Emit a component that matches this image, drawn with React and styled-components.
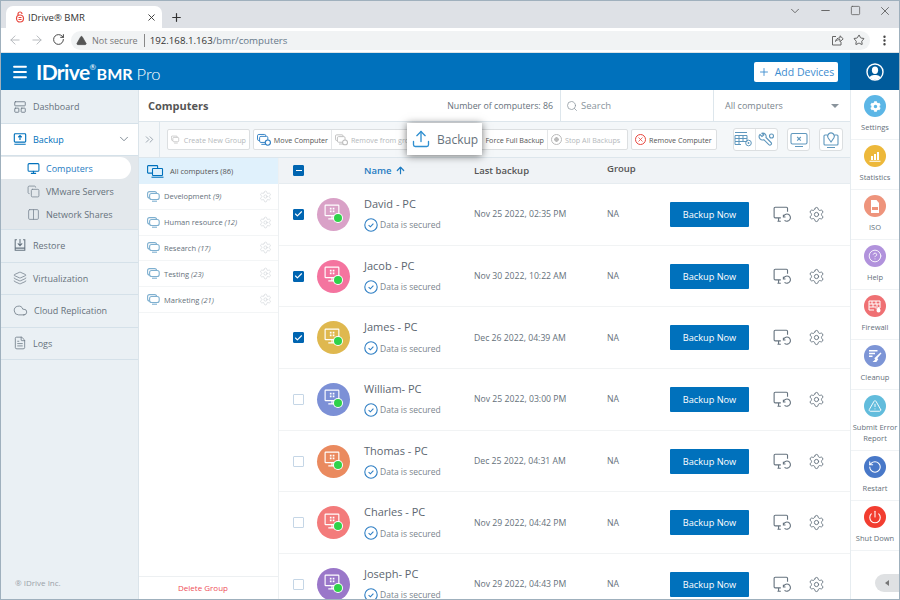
import React from 'react';
import styled, { createGlobalStyle } from 'styled-components';
import { FaCog } from 'react-icons/fa';
import {
  ArrowLeft, ArrowRight, RotateCw, TriangleAlert, Star, EllipsisVertical, Plus, X, Minus, Square, ChevronDown,
  Menu, LayoutPanelTop, Monitor, Copy, Columns2, Layers, Cloud, FileText, Search, Settings, CircleHelp, RotateCcw, Power,
  ChevronsRight, ArrowUp, Check, Upload,
} from 'lucide-react';

const GlobalStyle = createGlobalStyle`
  html, body { margin: 0; padding: 0; background: #fff; }
  body { font-family: "Open Sans", "Liberation Sans", sans-serif; color: #555; overflow: hidden; }
  * { box-sizing: border-box; }
`;

const UploadTray = ({ size = 14, color = '#0071bc' }) => (
  <svg width={size} height={size} viewBox="0 0 16 16" fill="none" stroke={color} strokeWidth="1.3">
    <rect x="1.5" y="2" width="13" height="9.5" rx="1" />
    <path d="M8 9V4.4M6 6l2-2 2 2M1.5 14h13" />
  </svg>
);

const RestoreIcon = () => (
  <svg width="14" height="15" viewBox="0 0 16 17" fill="none" stroke="#66737f" strokeWidth="1.2">
    <path d="M4.5 2H2.5v12h11V2h-2M8 1v7.5M5.5 6.2 8 8.8l2.5-2.6M2.5 11.5h11" />
  </svg>
);

const PcGroupIcon = ({ color = '#7fb0d0' }) => (
  <svg width="13" height="11" viewBox="0 0 13 11" fill="none" stroke={color} strokeWidth="1.1">
    <rect x="0.6" y="0.6" width="9" height="6.5" rx="2" />
    <rect x="2.6" y="2.5" width="9.6" height="6" rx="2" fill="#fff" />
    <path d="M5 10.2h5" />
  </svg>
);

const AllPcIcon = () => (
  <svg width="17" height="13" viewBox="0 0 17 13" fill="none" stroke="#0071bc" strokeWidth="1.1">
    <rect x="0.6" y="0.6" width="10" height="7.5" rx="0.6" />
    <rect x="5.5" y="3.5" width="10" height="7" rx="0.6" fill="#e0f1fc" />
    <path d="M4.5 12.2h12" />
  </svg>
);

const PcStatusIcon = () => (
  <svg width="19" height="19" viewBox="0 0 18 18" fill="none" stroke="#fff" strokeWidth="1.1">
    <rect x="2" y="2" width="13" height="10" rx="0.6" />
    <path d="M5 15h7M8.5 12v3" />
    <path d="M6.5 4.5h1.6v1.6H6.5zM9.2 4.5h1.6v1.6H9.2zM6.5 7.2h1.6v1.6H6.5zM9.2 7.2h1.6v1.6H9.2z" fill="#fff" stroke="none" />
  </svg>
);

const RowRestoreIcon = () => (
  <svg width="19" height="17" viewBox="0 0 17 15" fill="none" stroke="#66737f" strokeWidth="1">
    <path d="M7 10.5H2a1 1 0 0 1-1-1V2a1 1 0 0 1 1-1h10a1 1 0 0 1 1 1v3M4 13.5h3M5 10.5v3" />
    <path d="M9.3 9.5a3.2 3.2 0 1 1 1 3.2M9.3 7.8v1.9h1.9" />
  </svg>
);

const ToolPcIcon = ({ color, badge }) => (
  <svg width="16" height="14" viewBox="0 0 16 14" fill="none" stroke={color} strokeWidth="1.1">
    <rect x="0.6" y="0.6" width="9.5" height="7" rx="1.5" />
    <rect x="3" y="2.8" width="9.5" height="7" rx="1.5" fill="#fff" />
    <path d="M5 12h6" />
    {badge && <circle cx="12.5" cy="10" r="3" fill="#fff" stroke={badge} strokeWidth="1.3" />}
  </svg>
);

const ScheduleIcon = () => (
  <svg width="20" height="17" viewBox="0 0 20 17" fill="none" stroke="#5f97bd" strokeWidth="1">
    <path d="M1 1.5h12M1 4.5h12v6H1zM1 7.5h12M5 4.5v9M9 4.5v6M1 10.5v3h6" />
    <circle cx="14.5" cy="12" r="2.8" />
    <circle cx="14.5" cy="12" r="0.9" fill="#5f97bd" stroke="none" />
  </svg>
);

const WrenchIcon = () => (
  <svg width="18" height="16" viewBox="0 0 18 16" fill="none" stroke="#5f97bd" strokeWidth="1.1">
    <path d="M3 2.5 5 4.5 6.8 3 5 1.2a3.4 3.4 0 0 1 4 4.3l5 5a1.5 1.5 0 0 1-2.2 2.2l-5-5A3.4 3.4 0 0 1 2.5 3z" />
    <circle cx="14.5" cy="4" r="2" />
  </svg>
);

const ScreenXIcon = () => (
  <svg width="18" height="16" viewBox="0 0 18 16" fill="none" stroke="#5f97bd" strokeWidth="1.1">
    <rect x="1" y="1.5" width="16" height="10.5" rx="1.5" />
    <path d="M7.2 5l3.6 3.6M10.8 5 7.2 8.6M5 14.5h8" />
  </svg>
);

const ScreenPinIcon = () => (
  <svg width="16" height="18" viewBox="0 0 16 18" fill="none" stroke="#5f97bd" strokeWidth="1.1">
    <path d="M4 4H2a1 1 0 0 0-1 1v8a1 1 0 0 0 1 1h12a1 1 0 0 0 1-1V5a1 1 0 0 0-1-1h-2M4 16.5h8" />
    <path d="M8 11 5.2 7a3.3 3.3 0 1 1 5.6 0z" />
  </svg>
);

const SecuredIcon = () => (
  <svg width="14" height="14" viewBox="0 0 14 14" fill="none" stroke="#2f7fc4" strokeWidth="1.1">
    <circle cx="7" cy="7" r="6.2" />
    <path d="M4.6 7.1 6.4 8.8 9.4 5.6" />
  </svg>
);

const ShareBoxIcon = () => (
  <svg width="13" height="12" viewBox="0 0 13 12" fill="none" stroke="#666" strokeWidth="1">
    <path d="M5 2.5H1.5v8.5h8.5V8" />
    <path d="M4.5 7.5c.3-2.4 2-3.6 4.5-3.6V1.8l3.2 3-3.2 3V5.6c-1.8 0-3.4.5-4.5 1.9z" />
  </svg>
);

const ProfileIcon = () => (
  <svg width="18" height="18" viewBox="0 0 18 18">
    <defs>
      <clipPath id="profile-clip"><circle cx="9" cy="9" r="7.6" /></clipPath>
    </defs>
    <g clipPath="url(#profile-clip)" fill="#fff">
      <ellipse cx="9" cy="7.2" rx="3.1" ry="3.7" />
      <path d="M2.5 18c0-4.5 3-6 6.5-6s6.5 1.5 6.5 6z" />
    </g>
    <circle cx="9" cy="9" r="8" fill="none" stroke="#fff" strokeWidth="1.4" />
  </svg>
);

const menuTop = [
  { label: 'Dashboard', icon: <LayoutPanelTop size={14} color="#66737f" strokeWidth={1.4} /> },
];
const menuBottom = [
  { label: 'Restore', icon: <RestoreIcon /> },
  { label: 'Virtualization', icon: <Layers size={14} color="#66737f" strokeWidth={1.2} /> },
  { label: 'Cloud Replication', icon: <Cloud size={15} color="#66737f" strokeWidth={1.2} /> },
  { label: 'Logs', icon: <FileText size={14} color="#66737f" strokeWidth={1.3} /> },
];
const groups = [
  ['Development', '(9)'],
  ['Human resource', '(12)'],
  ['Research', '(17)'],
  ['Testing', '(23)'],
  ['Marketing', '(21)'],
];
const computers = [
  { name: 'David - PC', date: 'Nov 25 2022, 02:35 PM', color: '#d9a1c7', checked: true },
  { name: 'Jacob - PC', date: 'Nov 30 2022, 10:22 AM', color: '#f4749f', checked: true },
  { name: 'James - PC', date: 'Dec 26 2022, 04:39 AM', color: '#dfb84f', checked: true },
  { name: 'William- PC', date: 'Nov 25 2022, 03:00 PM', color: '#7c90d6' },
  { name: 'Thomas - PC', date: 'Dec 25 2022, 04:31 AM', color: '#ea8a5f' },
  { name: 'Charles - PC', date: 'Nov 29 2022, 04:42 PM', color: '#f37b7b' },
  { name: 'Joseph- PC', date: 'Nov 29 2022, 04:43 PM', color: '#9a77c9' },
];
const W = { color: '#fff', strokeWidth: 1.8, size: 12 };
const rail = [
  { label: ['Settings'], color: '#5cb6e6', icon: <FaCog size={11} color="#fff" /> },
  { label: ['Statistics'], color: '#edb83a', icon: <svg width="12" height="12" viewBox="0 0 12 12" fill="#fff"><path d="M2 6h2v4H2zM5 4h2v6H5zM8 2h2v8H8zM0.5 10.7h11v1h-11z" /></svg> },
  { label: ['ISO'], color: '#ee947c', icon: <svg width="12" height="13" viewBox="0 0 12 13" fill="#fff"><path d="M2 0h5.5L10 3v10H2z" /><path d="M3 7h6v3H3z" fill="#ee947c" /></svg> },
  { label: ['Help'], color: '#b192dc', icon: <CircleHelp {...W} size={14} strokeWidth={1.5} /> },
  { label: ['Firewall'], color: '#ef7073', icon: <svg width="14" height="13" viewBox="0 0 14 13" fill="none" stroke="#fff" strokeWidth="1"><path d="M1 1h11v7H7.5M1 1v9h5M1 4h11M1 7h7M4 1v3M8 1v3M5 4v3M9 4v3" /><path d="M10.5 7c1.2 1.3 2 2.3 2 3.4a2 2 0 0 1-4 0c0-1.1.8-2.1 2-3.4z" fill="#fff" stroke="none" /></svg> },
  { label: ['Cleanup'], color: '#7d95d6', icon: <svg width="14" height="14" viewBox="0 0 14 14" fill="#fff"><path d="M1 1h8.5v1.4H1zM1 3.8h6v1.4H1zM1 6.6h3.5V8H1z" /><path d="M12.5 3.5l1 .8-4.2 5 1 1-2 2.7H4.5l2.8-2.5-1-1.2 1.4-1.2z" /></svg> },
  { label: ['Submit Error', 'Report'], color: '#62bcdc', icon: <TriangleAlert {...W} size={14} strokeWidth={1.6} /> },
  { label: ['Restart'], color: '#4878c8', icon: <RotateCcw {...W} size={14} strokeWidth={1.8} /> },
  { label: ['Shut Down'], color: '#f23d30', icon: <Power {...W} size={14} strokeWidth={1.8} /> },
];

export default function App() {
  return (
    <Frame>
      <GlobalStyle />
      <TabStrip>
        <Tab>
          <Favicon viewBox="0 0 10 12" fill="none" stroke="#e8453c" strokeWidth="1.2">
            <path d="M3 5V3a2 2 0 0 1 4 0M1.5 7.5a3.5 3.5 0 1 0 7 0 3.5 3.5 0 0 0-7 0zM3.5 6.5h3M3.5 8.5h3" />
          </Favicon>
          <TabTitle>IDrive® BMR</TabTitle>
          <X size={11} color="#333" strokeWidth={2} />
        </Tab>
        <NewTab><Plus size={13} color="#333" strokeWidth={2.2} /></NewTab>
        <WindowControls>
          <ChevronDown size={14} color="#555" strokeWidth={1.4} />
          <Minus size={13} color="#555" strokeWidth={1.6} />
          <Square size={11} color="#555" strokeWidth={1.6} />
          <X size={14} color="#555" strokeWidth={1.4} />
        </WindowControls>
      </TabStrip>

      <AddressBar>
        <NavIcons>
          <ArrowLeft size={14} color="#b3b6ba" strokeWidth={1.6} />
          <ArrowRight size={14} color="#b3b6ba" strokeWidth={1.6} />
          <RotateCw size={13} color="#444" strokeWidth={1.8} />
        </NavIcons>
        <Omnibox>
          <TriangleAlert size={11} color="#555" fill="#555" strokeWidth={1.5} />
          <NotSecure>Not secure</NotSecure>
          <UrlDivider />
          <Url>192.168.1.163<UrlPath>/bmr/computers</UrlPath></Url>
          <OmniActions>
            <ShareBoxIcon />
            <Star size={12} color="#444" strokeWidth={1.7} />
          </OmniActions>
        </Omnibox>
        <MoreButton><EllipsisVertical size={13} color="#444" strokeWidth={2.4} /></MoreButton>
      </AddressBar>

      <Header>
        <HeaderMain>
          <Menu size={18} color="#fff" strokeWidth={2.4} />
          <Logo>
            <LogoMark>IDrive<sup>®</sup></LogoMark>
            <LogoBmr>BMR</LogoBmr>
            <LogoPro>Pro</LogoPro>
          </Logo>
          <AddDevices><Plus size={12} strokeWidth={1.8} />Add Devices</AddDevices>
        </HeaderMain>
        <Profile><ProfileIcon /></Profile>
      </Header>

      <Body>
        <Sidebar>
          {menuTop.map((m) => (
            <MenuItem key={m.label}>{m.icon}{m.label}</MenuItem>
          ))}
          <MenuItem $active>
            <UploadTray />Backup
            <MenuChevron><ChevronDown size={14} color="#66737f" strokeWidth={1.4} /></MenuChevron>
          </MenuItem>
          <SubMenu>
            <SubItem $active><Monitor size={13} color="#0071bc" strokeWidth={2} />Computers</SubItem>
            <SubItem><Copy size={13} color="#7b8894" strokeWidth={1.5} />VMware Servers</SubItem>
            <SubItem><Columns2 size={13} color="#7b8894" strokeWidth={1.5} />Network Shares</SubItem>
          </SubMenu>
          {menuBottom.map((m) => (
            <MenuItem key={m.label}>{m.icon}{m.label}</MenuItem>
          ))}
          <Copyright>® IDrive Inc.</Copyright>
        </Sidebar>

        <Main>
          <TitleBar>
            <PageTitle>Computers</PageTitle>
            <Count>Number of computers: 86</Count>
            <SearchBox><Search size={12} color="#8a949c" strokeWidth={1.5} />Search</SearchBox>
            <FilterBox>All computers<Caret /></FilterBox>
          </TitleBar>

          <Toolbar>
            <Expand><ChevronsRight size={13} color="#7b8894" strokeWidth={1.3} /></Expand>
            <ToolGroup>
              <ToolButton $off $w={81}><ToolPcIcon color="#bbb" />Create New Group</ToolButton>
            </ToolGroup>
            <ToolGroup>
              <ToolButton $w={78}><ToolPcIcon color="#2f7fc4" badge="#2f7fc4" />Move Computer</ToolButton>
              <ToolButton $off $w={90}><ToolPcIcon color="#bbb" badge="#bbb" />Remove from group</ToolButton>
              <ToolButton $w={126} $end>
                <BackupDot />Force Full Backup
              </ToolButton>
              <ToolButton $off $w={79}>
                <StopIcon />Stop All Backups
              </ToolButton>
            </ToolGroup>
            <ToolGroup>
              <ToolButton $w={84}><RemoveIcon><X size={7} color="#e8453c" strokeWidth={2.6} /></RemoveIcon>Remove Computer</ToolButton>
            </ToolGroup>
            <ToolIcons>
              <IconGroup><IconButton $w={21.5}><ScheduleIcon /></IconButton><IconButton $w={21.5}><WrenchIcon /></IconButton></IconGroup>
              <IconGroup><IconButton $w={21}><ScreenXIcon /></IconButton></IconGroup>
              <IconGroup><IconButton $w={22}><ScreenPinIcon /></IconButton></IconGroup>
            </ToolIcons>
            <BackupPopup>
              <Upload size={20} color="#2f8fd0" strokeWidth={1.6} />
              Backup
            </BackupPopup>
          </Toolbar>

          <Content>
            <GroupPanel>
              <AllGroup><AllPcIcon />All computers (86)</AllGroup>
              {groups.map(([name, n]) => (
                <GroupRow key={name}>
                  <PcGroupIcon />
                  <GroupName>{name} <em>{n}</em></GroupName>
                  <Settings size={13} color="#cfd4d8" strokeWidth={1.2} />
                </GroupRow>
              ))}
              <DeleteGroup>Delete Group</DeleteGroup>
            </GroupPanel>

            <Table>
              <HeadRow>
                <CheckBox $on><MinusBar /></CheckBox>
                <span />
                <NameHead>Name <ArrowUp size={11} strokeWidth={2.6} /></NameHead>
                <HeadCell>Last backup</HeadCell>
                <GroupHead>Group</GroupHead>
              </HeadRow>
              {computers.map((c) => (
                <Row key={c.name}>
                  <CheckBox $on={c.checked}>{c.checked && <Check size={10} color="#fff" strokeWidth={3} />}</CheckBox>
                  <Avatar $color={c.color}><PcStatusIcon /><Online /></Avatar>
                  <NameCell>
                    <PcName>{c.name}</PcName>
                    <Secured><SecuredIcon />Data is secured</Secured>
                  </NameCell>
                  <DateCell>{c.date}</DateCell>
                  <DateCell>NA</DateCell>
                  <BackupNow>Backup Now</BackupNow>
                  <RowActions>
                    <RowRestoreIcon />
                    <Settings size={17} color="#66737f" strokeWidth={1.3} />
                  </RowActions>
                </Row>
              ))}
            </Table>
          </Content>
        </Main>

        <Rail>
          {rail.map((r) => (
            <RailItem key={r.label[0]}>
              <RailCircle $color={r.color}>{r.icon}</RailCircle>
              {r.label.map((l) => <RailLabel key={l}>{l}</RailLabel>)}
            </RailItem>
          ))}
          <Collapse><CollapseArrow /></Collapse>
        </Rail>
      </Body>
    </Frame>
  );
}

const Frame = styled.div`
  width: 900px;
  height: 600px;
  border: 1px solid #9fb0bd;
  display: flex;
  flex-direction: column;
  overflow: hidden;
  background: #fff;
`;

const TabStrip = styled.div`
  height: 27px;
  flex: none;
  background: #dee1e6;
  display: flex;
  align-items: flex-end;
  padding-left: 5px;
`;

const Tab = styled.div`
  width: 156px;
  height: 22px;
  background: #fff;
  border-radius: 7px 7px 0 0;
  display: flex;
  align-items: center;
  padding: 0 5px 0 9px;
`;

const Favicon = styled.svg`
  width: 10px;
  height: 12px;
  margin-right: 3px;
`;

const TabTitle = styled.span`
  flex: 1;
  font-size: 9.5px;
  color: #333;
`;

const NewTab = styled.div`
  width: 28px;
  height: 22px;
  display: flex;
  align-items: center;
  justify-content: center;
`;

const WindowControls = styled.div`
  margin-left: auto;
  margin-right: 7px;
  width: 104px;
  height: 27px;
  padding-bottom: 8px;
  display: flex;
  align-items: center;
  justify-content: space-between;
`;

const AddressBar = styled.div`
  height: 25px;
  flex: none;
  background: #fff;
  display: flex;
  align-items: center;
  padding-left: 7px;
  border-bottom: 1px solid #dfe3e6;
`;

const NavIcons = styled.div`
  width: 63px;
  display: flex;
  gap: 8px;
`;

const Omnibox = styled.div`
  width: 799px;
  height: 19px;
  border-radius: 10px;
  background: #f1f3f4;
  display: flex;
  align-items: center;
  padding: 0 5px 0 5px;
`;

const NotSecure = styled.span`
  font-size: 9px;
  color: #777;
  margin-left: 5px;
`;

const UrlDivider = styled.span`
  width: 1px;
  height: 13px;
  background: #888;
  margin: 0 5px 0 6px;
`;

const Url = styled.span`
  font-size: 9.7px;
  color: #333;
`;

const UrlPath = styled.span`
  color: #66788a;
`;

const OmniActions = styled.div`
  margin-left: auto;
  display: flex;
  align-items: center;
  gap: 9px;
`;

const MoreButton = styled.div`
  margin-left: 8px;
  display: flex;
`;

const Header = styled.div`
  height: 37px;
  flex: none;
  display: flex;
  background: #0071bc;
`;

const HeaderMain = styled.div`
  flex: 1;
  display: flex;
  align-items: center;
  padding: 0 12px 0 10px;
`;

const Logo = styled.div`
  display: flex;
  align-items: baseline;
  margin-left: 7px;
  color: #fff;
`;

const LogoMark = styled.span`
  font-family: "Lato", sans-serif;
  font-size: 21px;
  font-weight: 700;
  letter-spacing: -0.6px;

  sup {
    font-size: 8px;
    font-weight: 400;
    vertical-align: 10px;
    line-height: 0;
  }
`;

const LogoBmr = styled.span`
  font-family: "Lato", sans-serif;
  font-size: 16px;
  font-weight: 700;
  margin-left: 1px;
`;

const LogoPro = styled.span`
  font-family: "Lato", sans-serif;
  font-size: 16.5px;
  font-weight: 300;
  margin-left: 4px;
`;

const AddDevices = styled.button`
  margin-left: auto;
  width: 84px;
  height: 20px;
  border: 0;
  border-radius: 2px;
  background: #fff;
  color: #3d8ccf;
  font: 400 10.5px "Open Sans", sans-serif;
  display: flex;
  align-items: center;
  justify-content: center;
  gap: 5px;
  padding: 0;
`;

const Profile = styled.div`
  width: 49px;
  flex: none;
  background: #005b9b;
  display: flex;
  align-items: center;
  justify-content: center;
`;

const Body = styled.div`
  flex: 1;
  min-height: 0;
  display: flex;
`;

const Sidebar = styled.nav`
  width: 138px;
  flex: none;
  padding-top: 1px;
  background: #eaf0f4;
  border-right: 1px solid #dbe4ea;
  display: flex;
  flex-direction: column;
`;

const MenuItem = styled.div`
  height: 32.5px;
  flex: none;
  display: flex;
  align-items: center;
  gap: 6px;
  padding-left: 12px;
  font-size: 9px;
  font-weight: 500;
  color: ${(p) => (p.$active ? '#0071bc' : '#66717b')};
  background: ${(p) => (p.$active ? '#fff' : 'transparent')};
  border-bottom: 1px solid #d5e1e9;
`;

const MenuChevron = styled.span`
  margin-left: auto;
  margin-right: 7px;
  display: flex;
`;

const SubMenu = styled.div`
  height: 74px;
  flex: none;
  background: #e3e8ec;
  padding-top: 1px;
  border-bottom: 1px solid #d5e1e9;
`;

const SubItem = styled.div`
  width: 130px;
  height: 22px;
  margin-bottom: 1px;
  padding-left: 26px;
  display: flex;
  align-items: center;
  gap: 6px;
  font-size: 9px;
  font-weight: 500;
  color: ${(p) => (p.$active ? '#1f7cc2' : '#66717b')};
  background: ${(p) => (p.$active ? '#fff' : 'transparent')};
  border-radius: 0 11px 11px 0;
`;

const Copyright = styled.div`
  margin-top: auto;
  padding: 0 0 11px 14px;
  font-size: 8px;
  color: #9aa2a8;
`;

const Main = styled.div`
  flex: 1;
  min-width: 0;
  display: flex;
  flex-direction: column;
`;

const TitleBar = styled.div`
  height: 32px;
  flex: none;
  display: flex;
  align-items: stretch;
  padding-left: 9px;
  border-bottom: 1px solid #dde6ec;
`;

const PageTitle = styled.div`
  flex: 1;
  align-self: center;
  font-size: 11px;
  font-weight: 700;
  color: #555;
`;

const Count = styled.div`
  align-self: center;
  margin-right: 7px;
  font-size: 8.8px;
  color: #66717b;
`;

const SearchBox = styled.div`
  width: 154px;
  border-left: 1px solid #dde6ec;
  border-right: 1px solid #dde6ec;
  display: flex;
  align-items: center;
  gap: 3px;
  padding-left: 5px;
  font-size: 9.5px;
  color: #8a949c;
`;

const FilterBox = styled.div`
  width: 136px;
  display: flex;
  align-items: center;
  justify-content: space-between;
  padding: 0 11px;
  font-size: 9px;
  color: #7b858d;
`;

const Caret = styled.span`
  width: 0;
  height: 0;
  border: 4px solid transparent;
  border-top: 4px solid #8a949c;
  border-bottom: 0;
`;

const Toolbar = styled.div`
  position: relative;
  height: 36px;
  flex: none;
  display: flex;
  align-items: center;
  gap: 3px;
  background: #f4f7f9;
  border-bottom: 1px solid #dde6ec;
`;

const Expand = styled.div`
  width: 21px;
  height: 100%;
  flex: none;
  display: flex;
  align-items: center;
  justify-content: center;
  border-right: 1px solid #dde6ec;
  margin-right: 4px;
`;

const ToolGroup = styled.div`
  flex: none;
  display: flex;
  box-sizing: content-box;
  height: 19px;
  background: #fff;
  border: 1px solid #dcdfe1;
  border-radius: 2px;
`;

const ToolButton = styled.div`
  width: ${(p) => p.$w}px;
  display: flex;
  align-items: center;
  justify-content: ${(p) => (p.$end ? 'flex-end' : 'flex-start')};
  gap: 3px;
  padding: 0 3px;
  font-size: 7.2px;
  white-space: nowrap;
  overflow: hidden;
  color: ${(p) => (p.$off ? '#b4b8bb' : '#555')};
  border-right: 1px solid #e4e6e8;

  &:last-child {
    border-right: 0;
  }
`;

const BackupDot = styled.span`
  width: 8px;
  height: 8px;
  border-radius: 50%;
  border: 1px solid #2f7fc4;
`;

const StopIcon = styled.span`
  width: 11px;
  height: 11px;
  flex: none;
  border-radius: 50%;
  border: 1px solid #bbb;
  background: radial-gradient(circle, #bbb 0 2px, transparent 2.5px);
`;

const RemoveIcon = styled.span`
  width: 11px;
  height: 11px;
  flex: none;
  border-radius: 50%;
  border: 1px solid #e8453c;
  display: flex;
  align-items: center;
  justify-content: center;
`;

const ToolIcons = styled.div`
  flex: none;
  margin-left: 13px;
  display: flex;
  gap: 9px;
`;

const IconGroup = styled.div`
  display: flex;
  box-sizing: content-box;
  height: 21px;
  background: #fff;
  border: 1px solid #dcdfe1;
  border-radius: 3px;
`;

const IconButton = styled.div`
  width: ${(p) => p.$w}px;
  display: flex;
  align-items: center;
  justify-content: center;
  border-right: 1px solid #e4e6e8;

  &:last-child {
    border-right: 0;
  }
`;

const BackupPopup = styled.div`
  position: absolute;
  left: 268px;
  top: 1px;
  width: 75px;
  height: 32px;
  background: #fff;
  box-shadow: 0 1px 8px rgba(0, 0, 0, 0.55);
  display: flex;
  align-items: center;
  gap: 6px;
  padding-left: 4px;
  font-size: 12px;
  color: #66717b;
`;

const Content = styled.div`
  flex: 1;
  min-height: 0;
  display: flex;
`;

const GroupPanel = styled.div`
  width: 140px;
  flex: none;
  display: flex;
  flex-direction: column;
  border-right: 1px solid #edf0f2;
`;

const AllGroup = styled.div`
  height: 26px;
  flex: none;
  display: flex;
  align-items: center;
  gap: 6px;
  padding-left: 8px;
  background: #e0f1fc;
  font-size: 7.5px;
  font-weight: 500;
  color: #555;
`;

const GroupRow = styled.div`
  height: 25.8px;
  flex: none;
  display: flex;
  align-items: center;
  gap: 4px;
  padding: 0 6px 0 8px;
  border-bottom: 1px solid #f3f5f6;
`;

const GroupName = styled.span`
  flex: 1;
  font-size: 7.5px;
  color: #66717b;
`;

const DeleteGroup = styled.div`
  margin-top: auto;
  height: 23px;
  padding: 0 11px 2px 0;
  display: flex;
  align-items: center;
  justify-content: center;
  font-size: 8px;
  color: #ee4d57;
  border-top: 1px solid #edf0f2;
`;

const Table = styled.div`
  flex: 1;
  min-width: 0;
  overflow: hidden;
`;

const HeadRow = styled.div`
  height: 26px;
  display: grid;
  grid-template-columns: 24px 47px 110px 133px 1fr;
  align-items: center;
  padding-left: 14px;
  background: #f0f3f6;
  border-bottom: 1px solid #e6ecf0;
`;

const HeadCell = styled.div`
  font-size: 9.5px;
  font-weight: 600;
  color: #555;
`;

const NameHead = styled(HeadCell)`
  display: flex;
  align-items: center;
  gap: 3px;
  color: #1f7cc2;
`;

const GroupHead = styled(HeadCell)`
  margin-top: -4px;
`;

const Row = styled.div`
  height: 61.7px;
  display: grid;
  grid-template-columns: 24px 47px 110px 133px 63px 79px 1fr;
  align-items: center;
  padding-left: 14px;
  border-bottom: 1px solid #f1f3f4;
`;

const CheckBox = styled.span`
  width: 11px;
  height: 11px;
  border-radius: 1px;
  display: flex;
  align-items: center;
  justify-content: center;
  background: ${(p) => (p.$on ? '#0065b1' : '#fff')};
  border: 1px solid ${(p) => (p.$on ? '#0065b1' : '#c5d6e6')};
`;

const MinusBar = styled.span`
  width: 6px;
  height: 1.5px;
  background: #fff;
`;

const Avatar = styled.div`
  position: relative;
  width: 33px;
  height: 33px;
  border-radius: 50%;
  padding: 0 2px 3px 0;
  background: ${(p) => p.$color};
  display: flex;
  align-items: center;
  justify-content: center;
`;

const Online = styled.span`
  position: absolute;
  right: 8px;
  bottom: 9px;
  width: 8px;
  height: 8px;
  border-radius: 50%;
  background: #2fd24a;
  box-shadow: 0 0 0 1px #fff;
`;

const NameCell = styled.div`
  display: flex;
  flex-direction: column;
  gap: 7px;
`;

const PcName = styled.div`
  font-size: 11px;
  line-height: 14px;
  color: #5c6670;
`;

const Secured = styled.div`
  display: flex;
  align-items: center;
  gap: 2px;
  font-size: 8.5px;
  color: #7b858d;
`;

const DateCell = styled.div`
  font-size: 8.7px;
  color: #66717b;
`;

const BackupNow = styled.button`
  width: 79px;
  height: 25px;
  border: 0;
  border-radius: 1px;
  background: #0071bc;
  color: #fff;
  font: 500 9.2px "Open Sans", sans-serif;
  padding: 0;
`;

const RowActions = styled.div`
  display: flex;
  align-items: center;
  gap: 16px;
  padding-left: 24px;
`;

const Rail = styled.aside`
  position: relative;
  width: 49px;
  flex: none;
  border-left: 1px solid #e6ecf0;
`;

const RailItem = styled.div`
  padding: 5px 0 6px;
  min-height: 50px;
  display: flex;
  flex-direction: column;
  align-items: center;
  border-bottom: 1px solid #f0f3f5;
`;

const RailCircle = styled.div`
  width: 22px;
  height: 22px;
  flex: none;
  border-radius: 50%;
  background: ${(p) => p.$color};
  display: flex;
  align-items: center;
  justify-content: center;
  margin-bottom: 5px;
`;

const RailLabel = styled.div`
  font-size: 7.5px;
  line-height: 11px;
  color: #66717b;
  white-space: nowrap;
`;

const Collapse = styled.div`
  position: absolute;
  right: 0;
  bottom: 7px;
  width: 24px;
  height: 18px;
  background: #dfe1e3;
  border-radius: 9px 0 0 9px;
  display: flex;
  align-items: center;
  justify-content: center;
`;

const CollapseArrow = styled.span`
  width: 0;
  height: 0;
  border: 3.5px solid transparent;
  border-right: 4px solid #777;
  border-left: 0;
`;
